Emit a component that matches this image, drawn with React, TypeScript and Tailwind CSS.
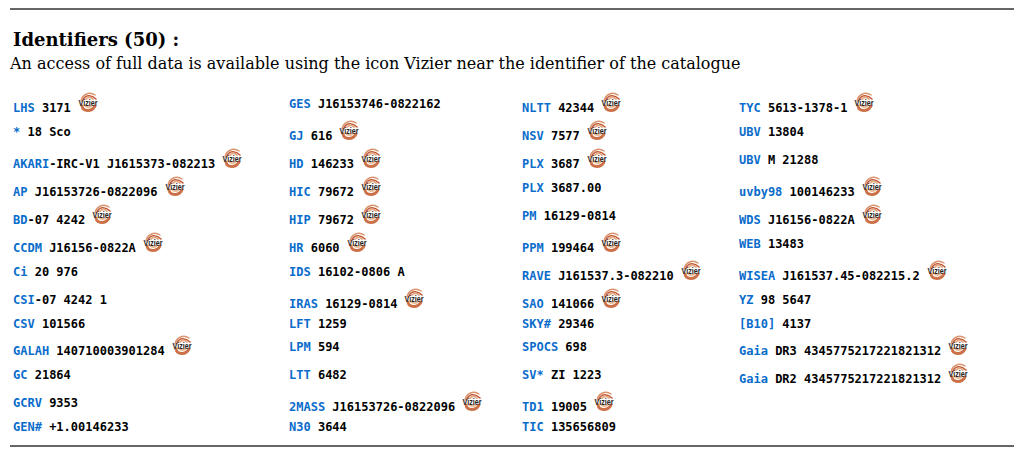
const vizierArcs = (
  <g fill="none" strokeLinecap="round">
    <path d="M3 9C4 3 11 -1 17 3" stroke="#d9946e" strokeWidth="1.500" />
    <path d="M5 8C7 3 13 2 18 7" stroke="#c25a38" strokeWidth="1.600" />
    <path d="M8 7C10 5 13 5 15 7" stroke="#e3aa84" strokeWidth="1.800" />
    <path d="M4 14C5 20 14 20 17 14" stroke="#cc7048" strokeWidth="2.800" />
    <path d="M7 13.500C9 15.500 12 15.500 14 13.500" stroke="#e8b88c" strokeWidth="2" />
  </g>
);

function VizierIcon() {
  return (
    <svg viewBox="0 0 20 20" className="ml-[7px] -mt-[8px] h-[20px] w-[20px] shrink-0 overflow-visible">
      {vizierArcs}
      <text x="0.500" y="13.500" fontSize="8.500" fontWeight="700" fontFamily="Liberation Sans, sans-serif" fill="#2a2422" textLength="19" lengthAdjust="spacingAndGlyphs">
        Vizier
      </text>
    </svg>
  );
}

type Row = { h: string; label: string; rest: string; icon?: boolean };

const columns: { cls: string; rows: Row[] }[] = [
  {
    cls: "w-[276px] pt-[4px]",
    rows: [
      { h: "h-[24px]", label: "LHS", rest: " 3171", icon: true },
      { h: "h-[32px]", label: "*", rest: " 18 Sco" },
      { h: "h-[28px]", label: "AKARI", rest: "-IRC-V1 J1615373-082213", icon: true },
      { h: "h-[28px]", label: "AP", rest: " J16153726-0822096", icon: true },
      { h: "h-[28px]", label: "BD", rest: "-07 4242", icon: true },
      { h: "h-[24px]", label: "CCDM", rest: " J16156-0822A", icon: true },
      { h: "h-[28px]", label: "Ci", rest: " 20 976" },
      { h: "h-[24px]", label: "CSI", rest: "-07 4242 1" },
      { h: "h-[27px]", label: "CSV", rest: " 101566" },
      { h: "h-[24px]", label: "GALAH", rest: " 140710003901284", icon: true },
      { h: "h-[28px]", label: "GC", rest: " 21864" },
      { h: "h-[24px]", label: "GCRV", rest: " 9353" },
      { h: "h-[16px]", label: "GEN#", rest: " +1.00146233" },
    ],
  },
  {
    cls: "w-[233px]",
    rows: [
      { h: "h-[32px]", label: "GES", rest: " J16153746-0822162" },
      { h: "h-[28px]", label: "GJ", rest: " 616", icon: true },
      { h: "h-[28px]", label: "HD", rest: " 146233", icon: true },
      { h: "h-[28px]", label: "HIC", rest: " 79672", icon: true },
      { h: "h-[28px]", label: "HIP", rest: " 79672", icon: true },
      { h: "h-[24px]", label: "HR", rest: " 6060", icon: true },
      { h: "h-[32px]", label: "IDS", rest: " 16102-0806 A" },
      { h: "h-[20px]", label: "IRAS", rest: " 16129-0814", icon: true },
      { h: "h-[23px]", label: "LFT", rest: " 1259" },
      { h: "h-[28px]", label: "LPM", rest: " 594" },
      { h: "h-[32px]", label: "LTT", rest: " 6482" },
      { h: "h-[20px]", label: "2MASS", rest: " J16153726-0822096", icon: true },
      { h: "h-[16px]", label: "N30", rest: " 3644" },
    ],
  },
  {
    cls: "w-[217px] pt-[4px]",
    rows: [
      { h: "h-[28px]", label: "NLTT", rest: " 42344", icon: true },
      { h: "h-[28px]", label: "NSV", rest: " 7577", icon: true },
      { h: "h-[24px]", label: "PLX", rest: " 3687", icon: true },
      { h: "h-[28px]", label: "PLX", rest: " 3687.00" },
      { h: "h-[32px]", label: "PM", rest: " 16129-0814" },
      { h: "h-[28px]", label: "PPM", rest: " 199464", icon: true },
      { h: "h-[28px]", label: "RAVE", rest: " J161537.3-082210", icon: true },
      { h: "h-[20px]", label: "SAO", rest: " 141066", icon: true },
      { h: "h-[23px]", label: "SKY#", rest: " 29346" },
      { h: "h-[28px]", label: "SPOCS", rest: " 698" },
      { h: "h-[32px]", label: "SV*", rest: " ZI 1223" },
      { h: "h-[20px]", label: "TD1", rest: " 19005", icon: true },
      { h: "h-[16px]", label: "TIC", rest: " 135656809" },
    ],
  },
  {
    cls: "pt-[4px]",
    rows: [
      { h: "h-[24px]", label: "TYC", rest: " 5613-1378-1", icon: true },
      { h: "h-[28px]", label: "UBV", rest: " 13804" },
      { h: "h-[32px]", label: "UBV", rest: " M 21288" },
      { h: "h-[28px]", label: "uvby98", rest: " 100146233", icon: true },
      { h: "h-[24px]", label: "WDS", rest: " J16156-0822A", icon: true },
      { h: "h-[32px]", label: "WEB", rest: " 13483" },
      { h: "h-[24px]", label: "WISEA", rest: " J161537.45-082215.2", icon: true },
      { h: "h-[24px]", label: "YZ", rest: " 98 5647" },
      { h: "h-[27px]", label: "[B10]", rest: " 4137" },
      { h: "h-[28px]", label: "Gaia", rest: " DR3 4345775217221821312", icon: true },
      { h: "h-[16px]", label: "Gaia", rest: " DR2 4345775217221821312", icon: true },
    ],
  },
];

export default function App() {
  return (
    <div className="h-[453px] w-[1021px] overflow-hidden bg-white pt-[8px] pl-[10px] pr-[7px] text-black">
      <div className="h-[2px] bg-[#666666]" />
      <h2 className="mt-[19px] pl-[3px] font-['DejaVu_Serif',serif] text-[18px] leading-[22px] font-bold">
        Identifiers (50) :
      </h2>
      <p className="mt-[3px] font-['DejaVu_Serif',serif] text-[16px] leading-[20px]">
        An access of full data is available using the icon Vizier near the identifier of the catalogue
      </p>
      <div className="mt-[22px] flex h-[349px] pl-[3px] font-['DejaVu_Sans_Mono',monospace] text-[12px] leading-[16px] font-bold">
        {columns.map((col, i) => (
          <div key={i} className={col.cls}>
            {col.rows.map((row, j) => (
              <div key={j} className={`flex items-start ${row.h}`}>
                <span className="whitespace-pre">
                  <span className="text-[#0a6ccb]">{row.label}</span>
                  {row.rest}
                </span>
                {row.icon && <VizierIcon />}
              </div>
            ))}
          </div>
        ))}
      </div>
      <div className="h-[2px] bg-[#666666]" />
    </div>
  );
}
